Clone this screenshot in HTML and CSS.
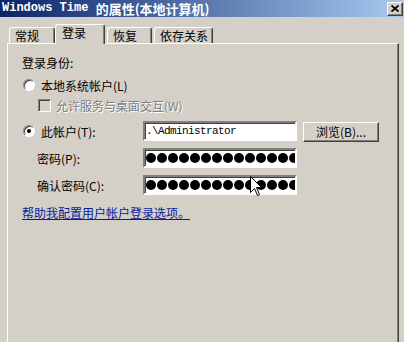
FILE: index.html
```html
<!DOCTYPE html>
<html lang="zh-CN">
  <head>
    <meta charset="UTF-8" />
    <meta name="viewport" content="width=device-width, initial-scale=1.0" />
    <title>Windows Time 的属性</title>
    <link rel="stylesheet" href="styles.css">
  </head>
  <body>
    <div class="window">
      <div class="titlebar">
        <div class="title"><span class="latin">Windows Time </span>的属性(本地计算机)</div>
        <div class="close">
          <svg width="8" height="7" viewBox="0 0 8 7">
            <path d="M0.5 0.5 L7.5 6.5 M7.5 0.5 L0.5 6.5" stroke="#000" stroke-width="1.8" />
          </svg>
        </div>
      </div>

      <div class="tabs">
        <div class="tab tab-general">常规</div>
        <div class="tab tab-logon active">登录</div>
        <div class="tab tab-recovery">恢复</div>
        <div class="tab tab-deps">依存关系</div>
      </div>

      <div class="panel">
        <div class="heading">登录身份:</div>

        <div class="option">
          <span class="radio"></span>
          <span>本地系统帐户(L)</span>
        </div>

        <div class="check disabled">
          <span class="checkbox"></span>
          <span>允许服务与桌面交互(W)</span>
        </div>

        <div class="row">
          <div class="row-label account-label">
            <span class="radio checked"></span>
            <span>此帐户(T):</span>
          </div>
          <div class="field"><span class="field-text">.\Administrator</span></div>
          <div class="btn">浏览(B)...</div>
        </div>

        <div class="row">
          <div class="row-label">密码(P):</div>
          <div class="field">
            <div class="dots">
              <i></i><i></i><i></i><i></i><i></i><i></i><i></i><i></i><i></i><i></i><i></i><i></i><i></i><i></i><i></i>
            </div>
          </div>
        </div>

        <div class="row">
          <div class="row-label">确认密码(C):</div>
          <div class="field">
            <div class="dots">
              <i></i><i></i><i></i><i></i><i></i><i></i><i></i><i></i><i></i><i></i><i></i><i></i><i></i><i></i><i></i>
            </div>
          </div>
          <!-- mouse pointer sitting over the confirm field -->
          <svg class="pointer" width="13" height="21" viewBox="0 0 13 21">
            <path d="M0.5 0.5 V16.5 L4.5 12.5 L7.5 19.5 L9.5 18.5 L6.5 11.5 H11.5 Z" fill="#fff" stroke="#000" stroke-width="1" />
          </svg>
        </div>

        <a class="link" href="#">帮助我配置用户帐户登录选项。</a>
      </div>
    </div>
  </body>
</html>
```

FILE: styles.css
```css
* {
  margin: 0;
  padding: 0;
  box-sizing: border-box;
}
body {
  font-family: "Noto Sans CJK SC", sans-serif;
  font-size: 12px;
  color: #000;
  background-color: #d4d0c8;
}
.window {
  position: relative;
  width: 404px;
  height: 342px;
  overflow: hidden;
  background-color: #d4d0c8;
}

/* caption */
.titlebar {
  height: 17px;
  display: flex;
  justify-content: space-between;
  align-items: center;
  padding: 0 1px 0 2px;
  background: linear-gradient(to right, #0a246a, #a6caf0);
}
.title {
  display: flex;
  align-items: center;
  height: 17px;
  color: #fff;
  font-weight: bold;
  font-size: 13px;
  line-height: 15px;
  white-space: nowrap;
}
.title .latin {
  font-family: "Liberation Mono", monospace;
  font-size: 12px;
  white-space: pre;
}
.close {
  width: 16px;
  height: 14px;
  display: flex;
  justify-content: center;
  align-items: center;
  background-color: #d4d0c8;
  border: 1px solid;
  border-color: #fff #404040 #404040 #fff;
  box-shadow: inset -1px -1px #808080;
}

/* tabs */
.tabs {
  position: relative;
  z-index: 1;
  display: flex;
  height: 20px;
  margin-top: 7px;
  padding-left: 9px;
}
.tab {
  height: 16px;
  margin-top: 3px;
  padding-left: 5px;
  line-height: 15px;
  white-space: nowrap;
  background-color: #d4d0c8;
  border: 1px solid;
  border-bottom: none;
  border-color: #fff #404040 #fff #fff;
  border-radius: 3px 3px 0 0;
  box-shadow: inset -1px 0 #808080;
}
.tab-general {
  width: 46px;
}
.tab-logon {
  width: 50px;
}
.tab-recovery {
  width: 45px;
  margin-left: 2px;
}
.tab-deps {
  width: 59px;
  margin-left: 2px;
}
.tab.active {
  height: 20px;
  margin-top: 0;
  padding-left: 6px;
  line-height: 16px;
}

/* page */
.panel {
  margin: -1px 0 0 7px;
  width: 392px;
  height: 320px;
  padding-top: 12px;
  border: 1px solid;
  border-bottom: none;
  border-color: #fff #404040 #fff #fff;
  box-shadow: inset -1px 0 #808080;
}
.heading {
  margin-left: 14px;
  line-height: 14px;
}
.option {
  display: flex;
  align-items: center;
  height: 14px;
  margin: 8px 0 0 15px;
  gap: 6px;
}
.radio {
  position: relative;
  width: 12px;
  height: 12px;
  border-radius: 50%;
  background-color: #fff;
  border: 1px solid;
  border-color: #808080 #fff #fff #808080;
  box-shadow: inset 1px 1px #404040;
}
.radio.checked::after {
  content: "";
  position: absolute;
  left: 3px;
  top: 3px;
  width: 4px;
  height: 4px;
  border-radius: 50%;
  background-color: #000;
}
.check {
  display: flex;
  align-items: center;
  height: 14px;
  margin: 6px 0 0 30px;
  gap: 5px;
}
.checkbox {
  width: 13px;
  height: 13px;
  background-color: #d4d0c8;
  border: 1px solid;
  border-color: #808080 #fff #fff #808080;
  box-shadow: inset 1px 1px #404040;
}
.disabled {
  color: #808080;
  text-shadow: 1px 1px #fff;
}

.row {
  position: relative;
  display: flex;
  align-items: center;
  height: 20px;
  margin-top: 7px;
}
.row-label {
  width: 106px;
  margin-left: 29px;
  white-space: nowrap;
}
.account-label {
  display: flex;
  align-items: center;
  gap: 6px;
  width: 120px;
  margin-left: 15px;
}
.option + .check + .row {
  margin-top: 9px;
}
.field {
  width: 154px;
  height: 20px;
  background-color: #fff;
  border: 2px solid;
  border-color: #808080 #fff #fff #808080;
  box-shadow: inset 1px 1px #404040;
  display: flex;
  align-items: center;
}
.field-text {
  padding-left: 1px;
  font-family: "Liberation Mono", monospace;
  font-size: 11px;
  letter-spacing: -0.6px;
  white-space: nowrap;
}
.dots {
  display: flex;
  gap: 1px;
  width: 100%;
  padding-left: 1px;
  overflow: hidden;
}
.dots i {
  flex: none;
  width: 10px;
  height: 10px;
  border-radius: 50%;
  background-color: #000;
}
.btn {
  align-self: flex-start;
  width: 76px;
  height: 20px;
  margin: 1px 0 0 6px;
  line-height: 17px;
  text-align: center;
  background-color: #d4d0c8;
  border: 1px solid;
  border-color: #fff #404040 #404040 #fff;
  box-shadow: inset -1px -1px #808080;
}
.pointer {
  position: absolute;
  left: 242px;
  top: 1px;
}
.link {
  display: inline-block;
  margin: 11px 0 0 14px;
  line-height: 14px;
  color: #0a1a9a;
  text-decoration: underline;
}
```
